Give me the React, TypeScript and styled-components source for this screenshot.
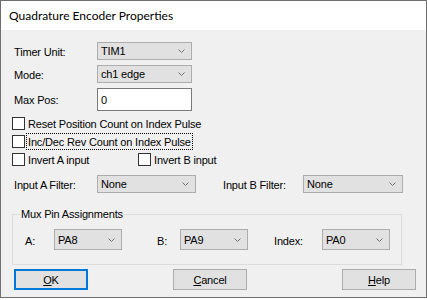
import React from "react";
import styled, { createGlobalStyle } from "styled-components";

const Global = createGlobalStyle`
  html, body { margin: 0; padding: 0; background: #ffffff; }
  body { width: 427px; height: 300px; overflow: hidden; }
`;

const Window = styled.div`
  box-sizing: border-box;
  width: 427px;
  height: 298px;
  border: 1px solid #6f6f6f;
  display: flex;
  flex-direction: column;
  background: #f0f0f0;
  font-family: "Liberation Sans", Arial, sans-serif;
  font-size: 11px;
  letter-spacing: -0.17px;
  color: #000;
`;

const TitleBar = styled.div`
  height: 29px;
  flex: none;
  background: #ffffff;
  display: flex;
  align-items: center;
  padding-left: 8px;
  font-family: Lato, "Noto Sans", sans-serif;
  font-size: 12px;
  letter-spacing: 0;
`;

const Body = styled.div`
  flex: 1;
  padding-left: 11px;
  display: flex;
  flex-direction: column;
`;

const FormGrid = styled.div`
  margin: 12px 0 0 2px;
  display: grid;
  grid-template-columns: 83px 95px;
  grid-template-rows: 18px 18px 22px;
  row-gap: 5px;
`;

const Label = styled.span<{ $w?: number; $ml?: number }>`
  display: flex;
  align-items: center;
  padding-top: 2px;
  box-sizing: border-box;
  ${(p) => (p.$w ? `width: ${p.$w}px; flex: none;` : "")}
  ${(p) => (p.$ml ? `margin-left: ${p.$ml}px;` : "")}
`;

const ComboBox = styled.div<{ $w: number; $h?: number }>`
  box-sizing: border-box;
  width: ${(p) => p.$w}px;
  height: ${(p) => p.$h ?? 18}px;
  flex: none;
  background: #e1e1e1;
  border: 1px solid #adadad;
  display: flex;
  align-items: center;
  justify-content: space-between;
  padding: 0 6px 0 3px;
`;

const Edit = styled.div`
  box-sizing: border-box;
  width: 95px;
  height: 23px;
  background: #ffffff;
  border: 1px solid #7a7a7a;
  display: flex;
  align-items: center;
  padding-left: 3px;
`;

const Checks = styled.div`
  margin-top: 5px;
  display: flex;
  flex-direction: column;
`;

const CheckRow = styled.div<{ $cols?: string }>`
  height: 18px;
  display: grid;
  grid-template-columns: ${(p) => p.$cols ?? "auto"};
  justify-content: start;
`;

const CheckItem = styled.div`
  display: flex;
  align-items: flex-start;
`;

const Box = styled.span`
  width: 13px;
  height: 13px;
  box-sizing: border-box;
  border: 1px solid #333333;
  background: #ffffff;
  margin-top: 2px;
  flex: none;
`;

const CheckText = styled.span<{ $focus?: boolean }>`
  margin-left: 1px;
  height: 17px;
  box-sizing: border-box;
  padding: 0 1px;
  display: flex;
  align-items: center;
  border: 1px dotted ${(p) => (p.$focus ? "#000" : "transparent")};
  white-space: nowrap;
`;

const FilterRow = styled.div`
  margin: 6px 0 0 2px;
  height: 18px;
  display: flex;
  align-items: stretch;
`;

const GroupBox = styled.div`
  position: relative;
  margin-top: 21px;
  box-sizing: border-box;
  width: 390px;
  border: 1px solid #dcdcdc;
  padding: 14px 0 14px 12px;
  display: flex;
  align-items: stretch;
  height: 51px;
`;

const GroupLabel = styled.span`
  position: absolute;
  top: -8px;
  left: 7px;
  padding: 0 1px;
  background: #f0f0f0;
  line-height: 14px;
`;

const PinRow = styled.div`
  display: flex;
  height: 21px;
`;

const ButtonRow = styled.div`
  margin: 4px 0 0 2px;
  display: flex;
`;

const Button = styled.div<{ $default?: boolean; $ml?: number }>`
  box-sizing: border-box;
  width: 74px;
  height: 21px;
  margin-left: ${(p) => p.$ml ?? 0}px;
  background: #e1e1e1;
  border: ${(p) => (p.$default ? "2px solid #0078d7" : "1px solid #adadad")};
  display: flex;
  align-items: center;
  justify-content: center;
  padding-top: 1px;
`;

const Chevron = () => (
  <svg width="7" height="4" viewBox="0 0 7 4" style={{ display: "block" }}>
    <polyline
      points="0.5,0.5 3.5,3.5 6.5,0.5"
      fill="none"
      stroke="#707070"
      strokeWidth="1"
    />
  </svg>
);

const Combo = ({ value, w, h }: { value: string; w: number; h?: number }) => (
  <ComboBox $w={w} $h={h}>
    <span>{value}</span>
    <Chevron />
  </ComboBox>
);

const Check = ({ text, focus }: { text: string; focus?: boolean }) => (
  <CheckItem>
    <Box />
    <CheckText $focus={focus}>{text}</CheckText>
  </CheckItem>
);

export default function App() {
  return (
    <>
      <Global />
      <Window>
        <TitleBar>Quadrature Encoder Properties</TitleBar>
        <Body>
          <FormGrid>
            <Label>Timer Unit:</Label>
            <Combo value="TIM1" w={95} />
            <Label>Mode:</Label>
            <Combo value="ch1 edge" w={95} />
            <Label>Max Pos:</Label>
            <Edit>0</Edit>
          </FormGrid>
          <Checks>
            <CheckRow>
              <Check text="Reset Position Count on Index Pulse" />
            </CheckRow>
            <CheckRow>
              <Check text="Inc/Dec Rev Count on Index Pulse" focus />
            </CheckRow>
            <CheckRow $cols="126px auto">
              <Check text="Invert A input" />
              <Check text="Invert B input" />
            </CheckRow>
          </Checks>
          <FilterRow>
            <Label $w={83}>Input A Filter:</Label>
            <Combo value="None" w={99} />
            <Label $w={80} $ml={27}>
              Input B Filter:
            </Label>
            <Combo value="None" w={100} />
          </FilterRow>
          <GroupBox>
            <GroupLabel>Mux Pin Assignments</GroupLabel>
            <PinRow>
              <Label $w={29}>A:</Label>
              <Combo value="PA8" w={68} h={21} />
              <Label $w={23} $ml={35}>
                B:
              </Label>
              <Combo value="PA9" w={68} h={21} />
              <Label $w={48} $ml={26}>
                Index:
              </Label>
              <Combo value="PA0" w={68} h={21} />
            </PinRow>
          </GroupBox>
          <ButtonRow>
            <Button $default>
              <span>
                <u>O</u>K
              </span>
            </Button>
            <Button $ml={85}>
              <span>
                <u>C</u>ancel
              </span>
            </Button>
            <Button $ml={95}>
              <span>
                <u>H</u>elp
              </span>
            </Button>
          </ButtonRow>
        </Body>
      </Window>
    </>
  );
}
